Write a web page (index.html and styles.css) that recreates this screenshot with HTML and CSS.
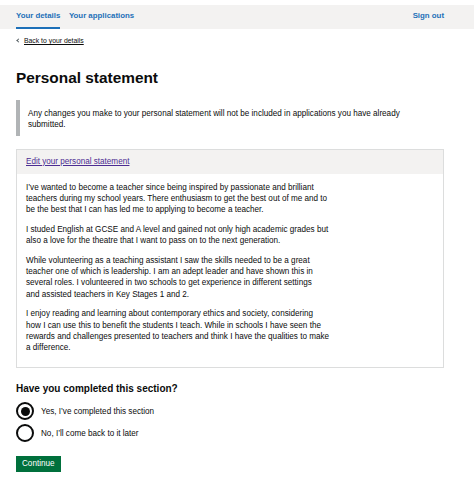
FILE: index.html
```html
<!DOCTYPE html>
<html lang="en">
<head>
<meta charset="utf-8">
<title>Personal statement</title>
<link rel="stylesheet" href="styles.css">
</head>
<body>
<header class="topnav">
  <nav class="topnav__list">
    <a class="topnav__link topnav__link--active" href="#">Your details</a>
    <a class="topnav__link" href="#">Your applications</a>
  </nav>
  <a class="topnav__link" href="#">Sign out</a>
</header>
<main class="page">
  <div class="back"><a class="back__link" href="#">Back to your details</a></div>
  <h1 class="heading">Personal statement</h1>
  <div class="inset">Any changes you make to your personal statement will not be included in applications you have already<br>submitted.</div>
  <section class="card">
    <div class="card__header"><a class="card__link" href="#">Edit your personal statement</a></div>
    <div class="card__body">
      <p>I’ve wanted to become a teacher since being inspired by passionate and brilliant<br>teachers during my school years. There enthusiasm to get the best out of me and to<br>be the best that I can has led me to applying to become a teacher.</p>
      <p>I studed English at GCSE and A level and gained not only high academic grades but<br>also a love for the theatre that I want to pass on to the next generation.</p>
      <p>While volunteering as a teaching assistant I saw the skills needed to be a great<br>teacher one of which is leadership. I am an adept leader and have shown this in<br>several roles. I volunteered in two schools to get experience in different settings<br>and assisted teachers in Key Stages 1 and 2.</p>
      <p>I enjoy reading and learning about contemporary ethics and society, considering<br>how I can use this to benefit the students I teach. While in schools I have seen the<br>rewards and challenges presented to teachers and think I have the qualities to make<br>a difference.</p>
    </div>
  </section>
  <form class="form">
    <fieldset class="radios">
      <legend class="radios__legend">Have you completed this section?</legend>
      <label class="radio"><input class="radio__input" type="radio" name="completed" checked>Yes, I’ve completed this section</label>
      <label class="radio"><input class="radio__input" type="radio" name="completed">No, I’ll come back to it later</label>
    </fieldset>
    <button class="button" type="button">Continue</button>
  </form>
</main>
</body>
</html>
```
FILE: styles.css
```css
body {
  margin: 0;
  font-family: "Liberation Sans", Arial, sans-serif;
  color: #0b0c0c;
  background: #ffffff;
}

.topnav {
  margin-top: 5px;
  height: 24px;
  background: #f3f2f1;
  display: flex;
  justify-content: space-between;
  padding: 0 30px 0 16px;
}

.topnav__list {
  display: flex;
  gap: 8.6px;
}

.topnav__link {
  font-weight: 700;
  font-size: 7.85px;
  line-height: 22px;
  color: #1d70b8;
  text-decoration: none;
  border-bottom: 2px solid transparent;
}

.topnav__link--active {
  border-bottom-color: #1d70b8;
}

.page {
  padding: 0 30px 0 16px;
}

.back {
  margin-top: 7px;
  line-height: 10px;
  font-size: 6.85px;
}

.back__link {
  color: #0b0c0c;
  text-decoration: underline;
}

.back__link::before {
  content: "";
  display: inline-block;
  width: 2px;
  height: 2px;
  border-left: 1px solid #505a5f;
  border-bottom: 1px solid #505a5f;
  transform: rotate(45deg);
  margin: 0 4px 0 1px;
  vertical-align: 1px;
}

.heading {
  margin: 23px 0 0;
  font-size: 15.4px;
  line-height: 18px;
  font-weight: 700;
}

.inset {
  margin-top: 13px;
  border-left: 4px solid #b1b4b6;
  padding: 7.5px 0 6px 8px;
  font-size: 8.15px;
  line-height: 11px;
}

.card {
  margin-top: 13.5px;
  border: 1px solid #dcdddd;
}

.card__header {
  background: #f3f2f1;
  padding: 0 9px;
  font-size: 8.15px;
  line-height: 24px;
}

.card__link {
  color: #4c2c92;
  text-decoration: underline;
}

.card__body {
  padding: 8px 9px 5.7px;
}

.card__body p {
  margin: 0 0 8.5px;
  font-size: 8.15px;
  line-height: 11.2px;
  white-space: nowrap;
}

.form {
  margin-top: 14px;
}

.radios {
  border: 0;
  margin: 0;
  padding: 0;
}

.radios__legend {
  padding: 0;
  font-size: 10px;
  line-height: 13px;
  font-weight: 700;
  margin-bottom: 7px;
}

.radio {
  display: flex;
  align-items: center;
  gap: 7px;
  height: 18px;
  margin-bottom: 4px;
  font-size: 8.15px;
}

.radio__input {
  appearance: none;
  -webkit-appearance: none;
  margin: 0;
  flex: none;
  width: 18px;
  height: 18px;
  box-sizing: border-box;
  border: 2px solid #0b0c0c;
  border-radius: 50%;
  display: grid;
  place-content: center;
  background: #ffffff;
}

.radio__input:checked::before {
  content: "";
  display: block;
  width: 9px;
  height: 9px;
  border-radius: 50%;
  background: #0b0c0c;
}

.button {
  display: block;
  margin-top: 9.7px;
  padding: 0 6px;
  border: 0;
  border-radius: 0;
  background: #00703c;
  box-shadow: 0 1px 0 #002d18;
  color: #ffffff;
  font-family: "Liberation Sans", Arial, sans-serif;
  font-size: 8.15px;
  line-height: 16px;
}
```
